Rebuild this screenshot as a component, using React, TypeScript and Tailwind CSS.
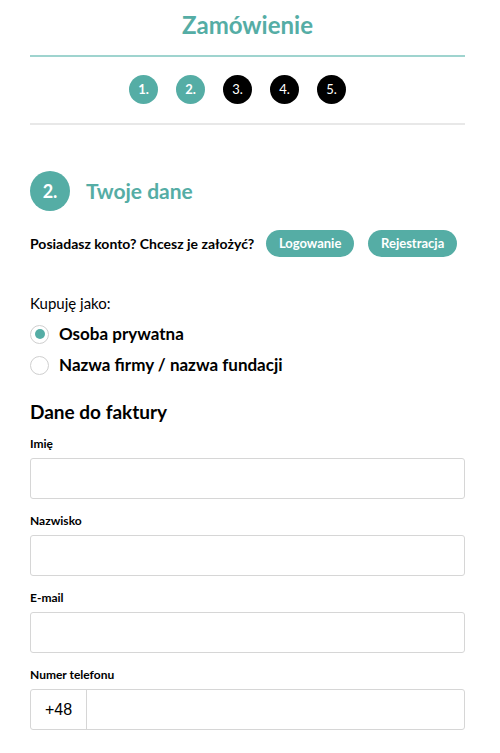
import React from "react";

const teal = "bg-[#55ada5]";

function Field({ label }: { label: string }) {
  return (
    <div className="flex flex-col">
      <label className="text-[12px] font-bold text-black leading-[16px] h-[16px]">{label}</label>
      <div className="mt-[6px] h-[41px] rounded-[3px] border border-[#d6d6d6] bg-white" />
    </div>
  );
}

export default function App() {
  return (
    <div className="w-[500px] h-[753px] overflow-hidden bg-white pl-[30px] pr-[35px] font-['Lato',sans-serif] text-black">
      <h1 className="pt-[10px] text-center text-[24px] leading-[30px] font-bold text-[#55ada5]">Zamówienie</h1>
      <div className="mt-[15px] h-[2px] bg-[#9fd4cf]" />
      <div className="flex justify-center gap-[18px] pt-[18px] pb-[19px] pr-[20px]">
        {["1.", "2.", "3.", "4.", "5."].map((s, i) => (
          <div
            key={s}
            className={`flex h-[29px] w-[29px] items-center justify-center rounded-full text-[13px] text-white ${i < 2 ? `${teal} font-bold` : "bg-black"}`}
          >
            {s}
          </div>
        ))}
      </div>
      <div className="h-[2px] bg-[#e8e8e8]" />

      <div className="mt-[46px] flex items-center gap-[16px]">
        <div className={`flex h-[40px] w-[40px] items-center justify-center rounded-full ${teal} text-[18px] font-bold text-white`}>2.</div>
        <div className="text-[21px] font-bold text-[#55ada5]">Twoje dane</div>
      </div>

      <div className="mt-[19px] flex items-center">
        <span className="text-[14px] font-bold">Posiadasz konto? Chcesz je założyć?</span>
        <button className={`ml-[12px] h-[27px] w-[88px] rounded-full ${teal} text-[13px] font-bold text-white`}>Logowanie</button>
        <button className={`ml-[14px] h-[27px] w-[89px] rounded-full ${teal} text-[13px] font-bold text-white`}>Rejestracja</button>
      </div>

      <div className="mt-[36px] text-[15px] leading-[20px]">Kupuję jako:</div>
      <div className="mt-[11px] flex items-center gap-[10px] h-[20px]">
        <div className="flex h-[19px] w-[19px] items-center justify-center rounded-full border border-[#cfcfcf]">
          <div className={`h-[10px] w-[10px] rounded-full ${teal}`} />
        </div>
        <span className="text-[17px] font-bold">Osoba prywatna</span>
      </div>
      <div className="mt-[11px] flex items-center gap-[10px] h-[20px]">
        <div className="h-[19px] w-[19px] rounded-full border border-[#cfcfcf]" />
        <span className="text-[17px] font-bold">Nazwa firmy / nazwa fundacji</span>
      </div>

      <div className="mt-[25px] text-[19px] font-bold leading-[24px]">Dane do faktury</div>

      <div className="mt-[12px] flex flex-col gap-[14px]">
        <Field label="Imię" />
        <Field label="Nazwisko" />
        <Field label="E-mail" />
        <div className="flex flex-col">
          <label className="text-[12px] font-bold leading-[16px] h-[16px]">Numer telefonu</label>
          <div className="mt-[6px] flex h-[41px] rounded-[3px] border border-[#d6d6d6]">
            <div className="flex w-[56px] items-center justify-center border-r border-[#d6d6d6] font-['Liberation_Sans',sans-serif] text-[16px]">+48</div>
            <div className="flex-1" />
          </div>
        </div>
      </div>
    </div>
  );
}
